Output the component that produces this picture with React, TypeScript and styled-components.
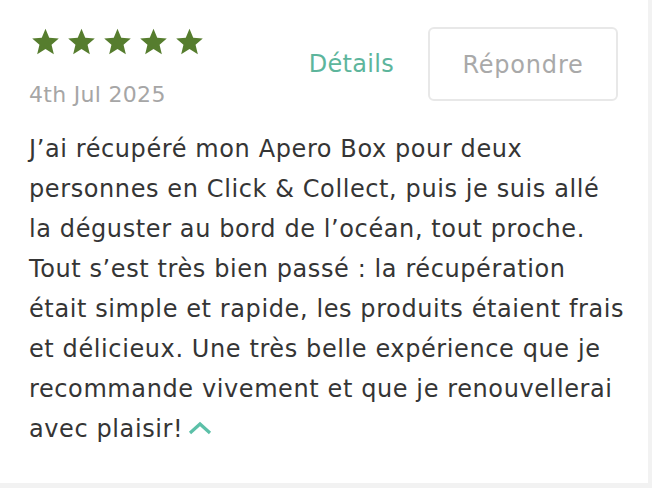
import styled, { createGlobalStyle } from 'styled-components';

const GlobalStyle = createGlobalStyle`
  html, body {
    margin: 0;
    padding: 0;
    background: #f2f2f2;
  }
  body {
    font-family: "DejaVu Sans", "Noto Sans", sans-serif;
  }
`;

const Card = styled.div`
  width: 648px;
  height: 483px;
  box-sizing: border-box;
  background: #ffffff;
  padding: 27px 30px 0 29px;
`;

const Header = styled.div`
  display: flex;
  align-items: flex-start;
  justify-content: space-between;
`;

const Meta = styled.div`
  display: flex;
  flex-direction: column;
`;

const Stars = styled.div`
  display: flex;
  gap: 7px;
  padding-left: 2px;
`;

const Date = styled.div`
  margin-top: 27px;
  font-size: 22px;
  line-height: 24px;
  letter-spacing: 0.3px;
  color: #a6a6a6;
`;

const Actions = styled.div`
  display: flex;
  align-items: center;
  gap: 34px;
`;

const DetailsLink = styled.a`
  font-size: 24px;
  letter-spacing: 0.3px;
  color: #5db59c;
  text-decoration: none;
  cursor: pointer;
`;

const ReplyButton = styled.button`
  width: 190px;
  height: 74px;
  padding-top: 3px;
  border: 2px solid #e8e8e8;
  border-radius: 6px;
  background: #ffffff;
  font-family: inherit;
  font-size: 24px;
  letter-spacing: 0.8px;
  color: #a9a9a9;
  cursor: pointer;
`;

const Body = styled.div`
  margin: 22px 0 0;
  font-size: 24px;
  line-height: 40px;
  letter-spacing: 0.6px;
  color: #353535;
  white-space: nowrap;
`;

const Line = styled.div``;

const Toggle = styled.span`
  display: inline-flex;
  vertical-align: middle;
  margin: -4px 0 0 4px;
  cursor: pointer;
`;

const Star = () => (
  <svg width="29" height="29" viewBox="0 0 24 24">
    <path
      fill="#567d2e"
      d="M12 1.5l3.1 7.4 7.9.6-6 5.2 1.9 7.8L12 18.3l-6.9 4.2 1.9-7.8-6-5.2 7.9-.6z"
    />
  </svg>
);

const lines = [
  'J’ai récupéré mon Apero Box pour deux',
  'personnes en Click & Collect, puis je suis allé',
  'la déguster au bord de l’océan, tout proche.',
  'Tout s’est très bien passé : la récupération',
  'était simple et rapide, les produits étaient frais',
  'et délicieux. Une très belle expérience que je',
  'recommande vivement et que je renouvellerai',
];

const App = () => (
  <>
    <GlobalStyle />
    <Card>
      <Header>
        <Meta>
          <Stars>
            {[0, 1, 2, 3, 4].map((i) => <Star key={i} />)}
          </Stars>
          <Date>4th Jul 2025</Date>
        </Meta>
        <Actions>
          <DetailsLink>Détails</DetailsLink>
          <ReplyButton type="button">Répondre</ReplyButton>
        </Actions>
      </Header>
      <Body>
        {lines.map((l) => <Line key={l}>{l}</Line>)}
        <Line>
          avec plaisir!
          <Toggle>
            <svg width="26" height="16" viewBox="0 0 26 16">
              <path d="M3 13l10-9 10 9" fill="none" stroke="#5cc0a8" strokeWidth="3.2" />
            </svg>
          </Toggle>
        </Line>
      </Body>
    </Card>
  </>
);

export default App;
